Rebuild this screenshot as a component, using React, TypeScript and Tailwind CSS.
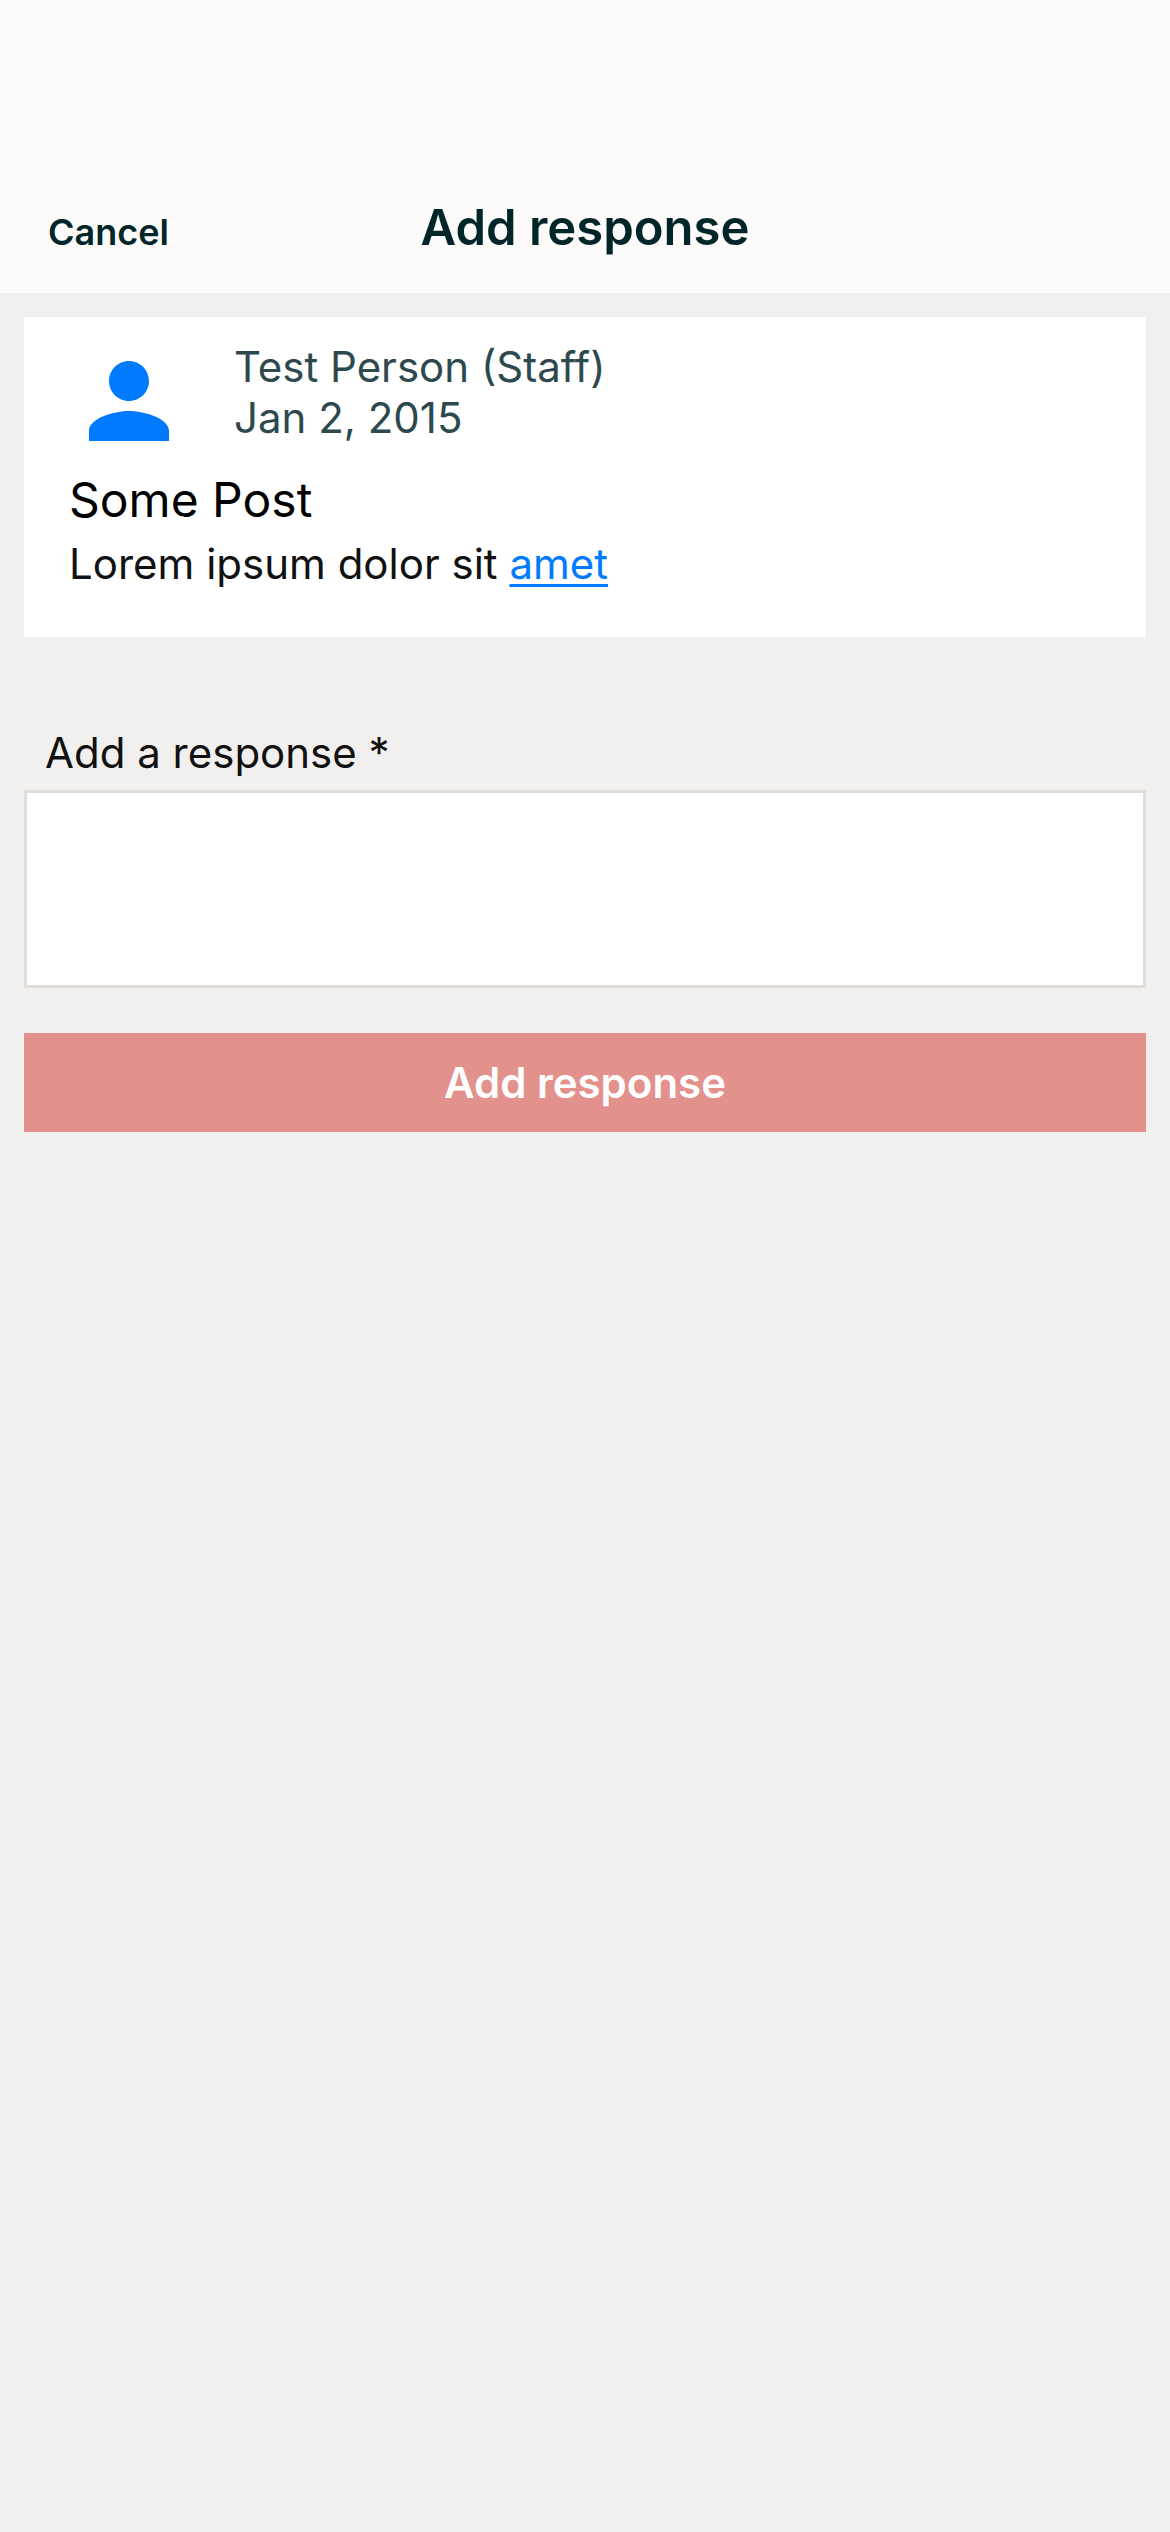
export default function App() {
  return (
    <div className="flex min-h-screen flex-col bg-[#f1f0ee] font-['Inter',sans-serif] text-[#111111]">
      <header className="grid grid-cols-[1fr_auto_1fr] items-baseline bg-[#fcfbf9] px-12 pt-[198px] pb-[35px] text-[#002629]">
        <button type="button" className="justify-self-start text-[36px] leading-[44px] font-semibold">Cancel</button>
        <h1 className="text-[49px] leading-[60px] font-semibold">Add response</h1>
      </header>
      <main className="flex flex-col px-6 pt-6">
        <article className="flex flex-col bg-white px-[45px] pt-6 pb-12">
          <div className="flex">
            <svg viewBox="0 0 24 24" className="size-[120px] shrink-0 text-[#007aff]" fill="currentColor" aria-hidden="true">
              <path d="M12 12c2.21 0 4-1.79 4-4s-1.79-4-4-4-4 1.79-4 4 1.79 4 4 4zm0 2c-2.67 0-8 1.34-8 4v2h16v-2c0-2.66-5.33-4-8-4z" />
            </svg>
            <div className="ml-[45px] text-[42px] leading-[51px] text-[#2d494e]">
              <p>Test Person (Staff)</p>
              <p>Jan 2, 2015</p>
            </div>
          </div>
          <h2 className="mt-[10px] text-[48px] leading-[58px] text-black">Some Post</h2>
          <p className="mt-[9px] text-[42px] leading-[51px]">
            Lorem ipsum dolor sit{" "}
            <a href="#amet" className="text-[#007aff] underline decoration-3 underline-offset-5">amet</a>
          </p>
        </article>
        <form className="mt-[90px] flex flex-col" onSubmit={(e) => e.preventDefault()}>
          <label htmlFor="response" className="px-[21px] text-[42px] leading-[51px]">Add a response *</label>
          <textarea id="response" className="mt-3 h-[198px] resize-none border-3 border-[#e0ddda] bg-white p-5 text-[42px] leading-[51px]" />
          <button type="submit" className="mt-[45px] bg-[#e2918c] py-6 text-[42px] leading-[51px] font-semibold text-white">Add response</button>
        </form>
      </main>
    </div>
  );
}
